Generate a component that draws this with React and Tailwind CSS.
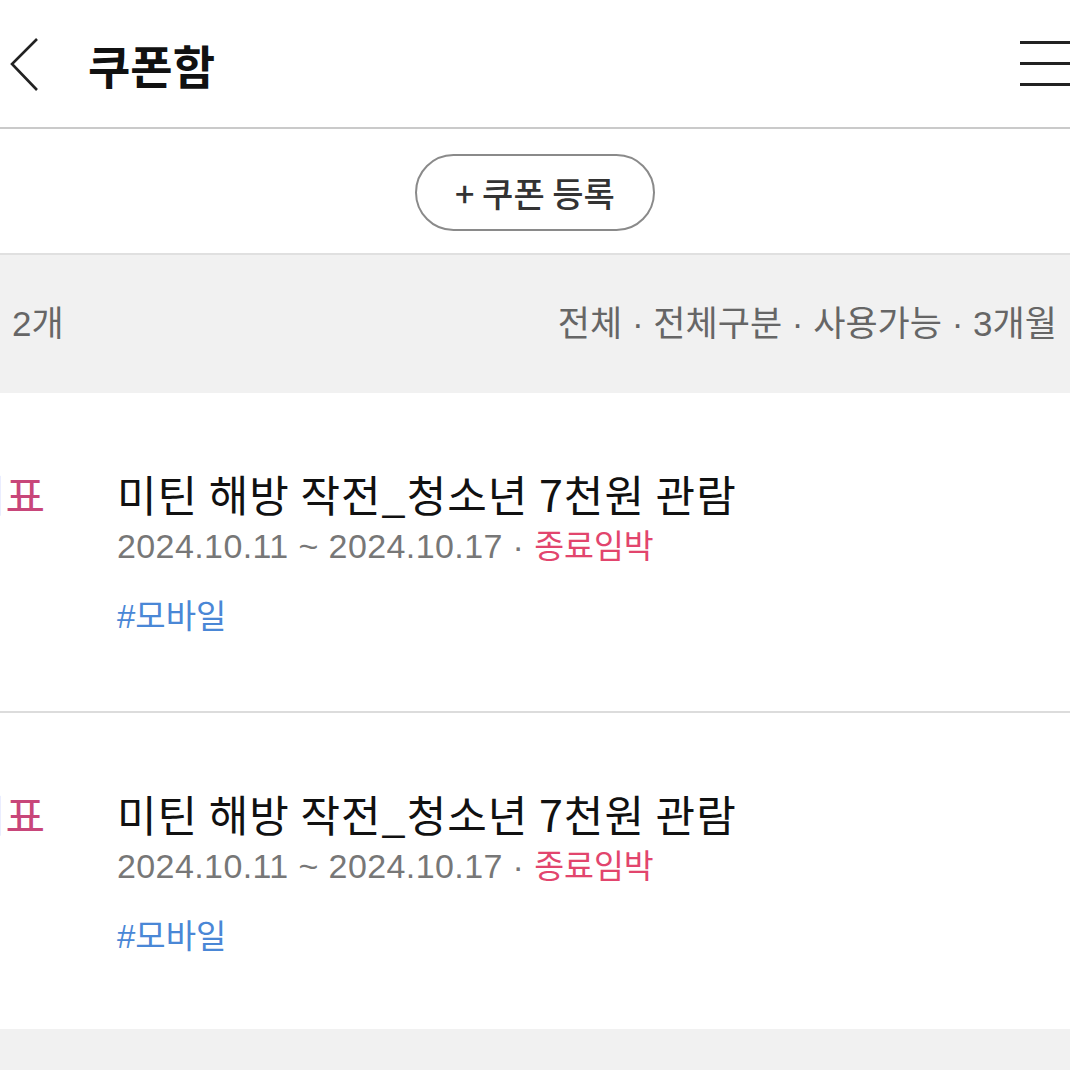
import React from "react";

const font = { fontFamily: '"Noto Sans CJK KR", "Noto Sans", sans-serif' };
const latin = { fontFamily: '"Liberation Sans", "Noto Sans CJK KR", sans-serif' };

function Item({ h }) {
  return (
    <div className={`flex bg-white ${h}`}>
      <div className="w-[117px] shrink-0 overflow-hidden pt-[76px]">
        <div className="ml-[-34px] text-[43px] leading-[48px] text-[#c8467a] whitespace-nowrap">지표</div>
      </div>
      <div className="flex flex-col pt-[76px]">
        <div className="text-[43px] leading-[48px] text-[#111] whitespace-nowrap tracking-[1px]">미틴 해방 작전_청소년 7천원 관람</div>
        <div className="mt-[9px] text-[34px] leading-[40px] text-[#777] whitespace-nowrap tracking-[0.4px]" style={latin}>
          2024.10.11 ~ 2024.10.17 · <span className="text-[#e2456d] tracking-normal text-[32.5px]">종료임박</span>
        </div>
        <div className="mt-[30px] text-[33px] leading-[40px] text-[#4a87d6] whitespace-nowrap" style={latin}>#모바일</div>
      </div>
    </div>
  );
}

export default function App() {
  return (
    <div className="w-[1070px] h-[1070px] overflow-hidden bg-[#f1f1f1]" style={font}>
      <div className="flex h-[127px] items-center bg-white">
        <svg width="40" height="60" viewBox="0 0 40 60" className="ml-[4px]">
          <path d="M33 5 L8 30 L33 56" fill="none" stroke="#222" strokeWidth="2.6" />
        </svg>
        <div className="ml-[44px] text-[46px] font-bold text-[#111] leading-none">쿠폰함</div>
        <div className="ml-auto flex flex-col gap-[18px] w-[50px]">
          <div className="h-[3px] bg-[#222]" />
          <div className="h-[3px] bg-[#222]" />
          <div className="h-[3px] bg-[#222]" />
        </div>
      </div>
      <div className="h-[2px] bg-[#cacaca]" />
      <div className="flex h-[126px] justify-center items-start pt-[25px] bg-white border-b-2 border-[#e0e0e0]">
        <div className="flex h-[77px] w-[240px] items-center justify-center rounded-full border-2 border-[#8a8a8a] text-[34px] font-medium text-[#333]">
          + 쿠폰 등록
        </div>
      </div>
      <div className="flex h-[138px] items-center justify-between pl-[12px] pr-[13px] text-[35px] text-[#666]" style={latin}>
        <span>2개</span>
        <span>전체 · 전체구분 · 사용가능 · 3개월</span>
      </div>
      <Item h="h-[318px]" />
      <div className="h-[2px] bg-[#dcdcdc]" />
      <Item h="h-[316px]" />
    </div>
  );
}
